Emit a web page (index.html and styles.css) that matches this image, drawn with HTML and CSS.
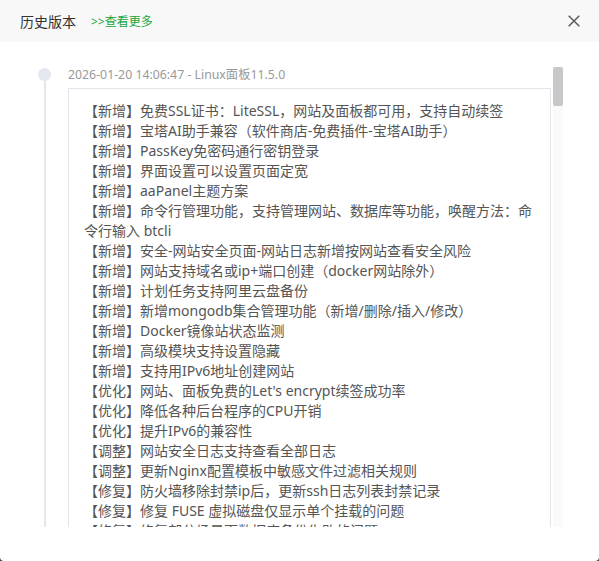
FILE: index.html
```html
<!DOCTYPE html>
<html lang="zh-CN">
<head>
<meta charset="utf-8">
<title>历史版本</title>
<link rel="stylesheet" href="styles.css">
</head>
<body>
<div class="dialog">
  <div class="header">
    <span class="title">历史版本</span>
    <a class="more" href="#">&gt;&gt;查看更多</a>
    <svg class="close" viewBox="0 0 12 12" aria-label="关闭"><path d="M0.7 0.7L11.3 11.3M11.3 0.7L0.7 11.3" stroke="#555" stroke-width="1.4" fill="none"/></svg>
  </div>
  <div class="body">
    <div class="scroll">
      <div class="timeline">
        <div class="tl-item">
          <div class="tl-axis"><span class="tl-dot"></span><span class="tl-line"></span></div>
          <div class="tl-content">
            <div class="tl-date">2026-01-20 14:06:47 - Linux面板11.5.0</div>
            <div class="tl-box">
              <p>【新增】免费SSL证书：LiteSSL，网站及面板都可用，支持自动续签</p>
              <p>【新增】宝塔AI助手兼容（软件商店-免费插件-宝塔AI助手）</p>
              <p>【新增】PassKey免密码通行密钥登录</p>
              <p>【新增】界面设置可以设置页面定宽</p>
              <p>【新增】aaPanel主题方案</p>
              <p>【新增】命令行管理功能，支持管理网站、数据库等功能，唤醒方法：命令行输入 btcli</p>
              <p>【新增】安全-网站安全页面-网站日志新增按网站查看安全风险</p>
              <p>【新增】网站支持域名或ip+端口创建（docker网站除外）</p>
              <p>【新增】计划任务支持阿里云盘备份</p>
              <p>【新增】新增mongodb集合管理功能（新增/删除/插入/修改）</p>
              <p>【新增】Docker镜像站状态监测</p>
              <p>【新增】高级模块支持设置隐藏</p>
              <p>【新增】支持用IPv6地址创建网站</p>
              <p>【优化】网站、面板免费的Let's encrypt续签成功率</p>
              <p>【优化】降低各种后台程序的CPU开销</p>
              <p>【优化】提升IPv6的兼容性</p>
              <p>【调整】网站安全日志支持查看全部日志</p>
              <p>【调整】更新Nginx配置模板中敏感文件过滤相关规则</p>
              <p>【修复】防火墙移除封禁ip后，更新ssh日志列表封禁记录</p>
              <p>【修复】修复 FUSE 虚拟磁盘仅显示单个挂载的问题</p>
              <p>【修复】修复部分场景下数据库备份失败的问题</p>
            </div>
          </div>
        </div>
      </div>
    </div>
    <div class="scrollbar"><div class="thumb"></div></div>
  </div>
</div>
</body>
</html>
```

FILE: styles.css
```css
html, body {
  margin: 0;
  padding: 0;
  background: #3a3a3a;
}

body {
  font-family: "Noto Sans", "Noto Sans CJK SC", sans-serif;
}

.dialog {
  width: 599px;
  height: 561px;
  display: flex;
  flex-direction: column;
  background: #fff;
  border-radius: 0 0 4px 4px;
  overflow: hidden;
}

.header {
  height: 42px;
  flex: none;
  display: flex;
  align-items: center;
  padding: 0 19px 0 20px;
  background: #f8f8f8;
}

.title {
  font-size: 14px;
  color: #333;
}

.more {
  margin-left: 15px;
  font-size: 12px;
  color: #20a53a;
  text-decoration: none;
}

.close {
  margin-left: auto;
  width: 12px;
  height: 12px;
}

.body {
  flex: 1;
  min-height: 0;
  display: flex;
  align-items: flex-start;
  padding: 25px 36px 34px 20px;
}

.scroll {
  flex: 1;
  min-width: 0;
  height: 460px;
  overflow: hidden;
}

.scrollbar {
  width: 10px;
  height: 460px;
  flex: none;
  background: #fafafa;
}

.thumb {
  height: 39px;
  background: #c8c8c8;
  border-radius: 2px;
}

.tl-item {
  display: flex;
}

.tl-axis {
  width: 48px;
  flex: none;
  display: flex;
  flex-direction: column;
  padding-left: 18px;
  box-sizing: border-box;
}

.tl-dot {
  width: 13px;
  height: 13px;
  margin-top: 1px;
  border-radius: 50%;
  background: #e4e7ed;
  flex: none;
}

.tl-line {
  flex: 1;
  width: 2px;
  margin-left: 5.5px;
  background: #e4e7ed;
}

.tl-content {
  flex: 1;
  min-width: 0;
  padding-bottom: 20px;
}

.tl-date {
  font-size: 12.3px;
  line-height: 16px;
  color: #999;
}

.tl-box {
  margin: 5px 2px 0 0;
  padding: 12px 15px;
  border: 1px solid #e4e5ec;
}

.tl-box p {
  margin: 0;
  font-size: 14px;
  line-height: 20px;
  color: #555;
}
```
